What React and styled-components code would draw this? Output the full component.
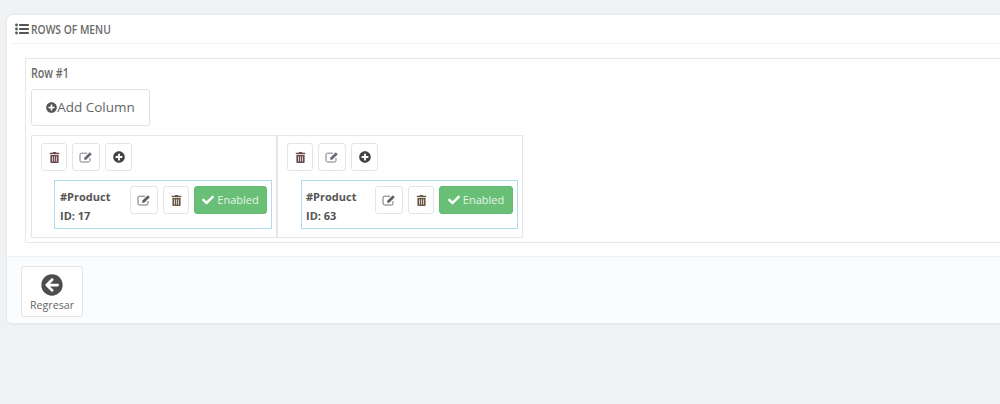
import React from "react";
import styled, { createGlobalStyle } from "styled-components";
import {
  FaArrowCircleLeft,
  FaCheck,
  FaPlusCircle,
  FaTrashAlt,
} from "react-icons/fa";

const GlobalStyle = createGlobalStyle`
  html, body {
    margin: 0;
    height: 404px;
    overflow: hidden;
    background: #eff1f3;
    font-family: "Open Sans", "Liberation Sans", sans-serif;
    color: #555;
  }
`;

const Panel = styled.div`
  box-sizing: border-box;
  width: 1100px;
  height: 308px;
  margin: 15px 0 0 7px;
  background: #fff;
  border-radius: 5px;
  box-shadow: 0 0 0 1px #e6e8ea, 0 1px 2px rgba(0, 0, 0, 0.08);
  display: flex;
  flex-direction: column;
`;

const PanelHeading = styled.div`
  box-sizing: border-box;
  height: 29px;
  margin-left: 4px;
  padding-left: 4px;
  display: flex;
  align-items: center;
  gap: 2px;
  border-bottom: 1px solid #f1f2f4;
  font-size: 13px;
  color: #6a6a6a;
`;

const Condensed = styled.span`
  display: inline-block;
  transform: scaleX(0.79);
  transform-origin: left center;
  white-space: nowrap;
  font-weight: 600;
`;

const PanelBody = styled.div`
  flex: 1;
  padding: 14px 0 0 18px;
`;

const RowBox = styled.div`
  box-sizing: border-box;
  height: 185px;
  padding: 5px;
  border: 1px solid #e6e7e9;
`;

const RowTitle = styled.div`
  height: 19px;
  font-size: 13.5px;
  line-height: 19px;
  color: #6a6a6a;
`;

const AddColumn = styled.button`
  box-sizing: border-box;
  width: 119px;
  height: 37px;
  margin-top: 6px;
  padding: 0 0 1px;
  display: flex;
  align-items: center;
  justify-content: center;
  background: #fff;
  border: 1px solid #e0e1e3;
  border-radius: 3px;
  font-family: inherit;
  font-size: 13.5px;
  color: #666;
  svg {
    font-size: 11px;
    color: #555;
  }
`;

const Columns = styled.div`
  display: flex;
  margin-top: 9px;
`;

const Column = styled.div`
  box-sizing: border-box;
  width: 246px;
  height: 103px;
  padding: 7px 4px 0 9px;
  border: 1px solid #e6e7e9;
`;

const ColumnTools = styled.div`
  display: flex;
  gap: 5px;
`;

const ToolButton = styled.button`
  box-sizing: border-box;
  width: ${({ $w }) => $w || 26}px;
  height: 28px;
  padding: 0;
  display: flex;
  align-items: center;
  justify-content: center;
  background: #fff;
  border: 1px solid #e4e5e7;
  border-radius: 3px;
  color: ${({ $color }) => $color || "#555"};
  font-size: ${({ $size }) => $size || 11}px;
`;

const ProductBox = styled.div`
  box-sizing: border-box;
  width: ${({ $w }) => $w}px;
  height: 49px;
  margin: 9px 0 0 ${({ $offset }) => $offset}px;
  padding: 5px 4px 0 ${({ $textPad }) => $textPad}px;
  display: flex;
  border: 1px solid #aedcf0;
`;

const ProductInfo = styled.div`
  flex: 1;
  padding-top: 1px;
  font-size: 11px;
  font-weight: 700;
  line-height: 19px;
  color: #555;
`;

const ProductTools = styled.div`
  display: flex;
  gap: 5px;
`;

const EnabledButton = styled.button`
  box-sizing: border-box;
  width: ${({ $w }) => $w}px;
  height: 28px;
  padding: 0 0 1px;
  display: flex;
  align-items: center;
  justify-content: center;
  gap: 3px;
  background: #69bf76;
  border: 1px solid #64ba71;
  border-radius: 3px;
  font-family: inherit;
  font-size: 11px;
  color: #e6f4e8;
  svg {
    font-size: 12px;
    color: #fff;
  }
`;

const PanelFooter = styled.div`
  box-sizing: border-box;
  height: 67px;
  padding: 9px 0 0 14px;
  background: #fbfcfd;
  border-top: 1px solid #f0f1f3;
  border-radius: 0 0 5px 5px;
`;

const BackButton = styled.button`
  box-sizing: border-box;
  width: 62px;
  height: 51px;
  padding: 0;
  display: flex;
  flex-direction: column;
  align-items: center;
  justify-content: flex-start;
  background: #fff;
  border: 1px solid #e4e5e7;
  border-radius: 3px;
  font-family: inherit;
  font-size: 10.7px;
  color: #666;
  svg {
    margin-top: 7px;
    margin-bottom: 2px;
    font-size: 22px;
    color: #4d4d4f;
  }
`;

// font-awesome 4 list-ul, the v5 one in react-icons is too thin at this size
const ListIcon = () => (
  <svg width="14" height="12" viewBox="0 0 14 12" fill="#555">
    <circle cx="1.5" cy="2" r="1.4" />
    <circle cx="1.5" cy="6" r="1.4" />
    <circle cx="1.5" cy="10" r="1.4" />
    <rect x="4" y="1" width="10" height="2" rx="0.4" />
    <rect x="4" y="5" width="10" height="2" rx="0.4" />
    <rect x="4" y="9" width="10" height="2" rx="0.4" />
  </svg>
);

// font-awesome 4 pencil-square-o
const EditIcon = () => (
  <svg width="14" height="12" viewBox="0 0 14 12">
    <path
      d="M8 2.2H2.6A1.6 1.6 0 0 0 1 3.8v5.6A1.6 1.6 0 0 0 2.6 11h6.8A1.6 1.6 0 0 0 11 9.4V7"
      fill="none"
      stroke="currentColor"
      strokeWidth="0.9"
    />
    <path d="M5.2 6.8 10.8 1.2l2 2-5.6 5.6H5.2z" fill="currentColor" />
  </svg>
);

const columns = [
  { id: 17, offset: 13, boxWidth: 218, enabledWidth: 73, textPad: 5 },
  { id: 63, offset: 14, boxWidth: 217, enabledWidth: 74, textPad: 4 },
];

const App = () => {
  return (
    <>
      <GlobalStyle />
      <Panel>
        <PanelHeading>
          <ListIcon />
          <Condensed>ROWS OF MENU</Condensed>
        </PanelHeading>
        <PanelBody>
          <RowBox>
            <RowTitle>
              <Condensed>Row #1</Condensed>
            </RowTitle>
            <AddColumn>
              <FaPlusCircle />
              Add Column
            </AddColumn>
            <Columns>
              {columns.map((col) => (
                <Column key={col.id}>
                  <ColumnTools>
                    <ToolButton $color="#6b4b4f">
                      <FaTrashAlt />
                    </ToolButton>
                    <ToolButton $w={28} $color="#6d6a78">
                      <EditIcon />
                    </ToolButton>
                    <ToolButton $w={27} $color="#444" $size={12}>
                      <FaPlusCircle />
                    </ToolButton>
                  </ColumnTools>
                  <ProductBox
                    $offset={col.offset}
                    $w={col.boxWidth}
                    $textPad={col.textPad}
                  >
                    <ProductInfo>
                      #Product
                      <br />
                      ID: {col.id}
                    </ProductInfo>
                    <ProductTools>
                      <ToolButton $w={28} $color="#5c6068">
                        <EditIcon />
                      </ToolButton>
                      <ToolButton $color="#6b5a48">
                        <FaTrashAlt />
                      </ToolButton>
                      <EnabledButton $w={col.enabledWidth}>
                        <FaCheck />
                        Enabled
                      </EnabledButton>
                    </ProductTools>
                  </ProductBox>
                </Column>
              ))}
            </Columns>
          </RowBox>
        </PanelBody>
        <PanelFooter>
          <BackButton>
            <FaArrowCircleLeft />
            Regresar
          </BackButton>
        </PanelFooter>
      </Panel>
    </>
  );
};

export default App;
